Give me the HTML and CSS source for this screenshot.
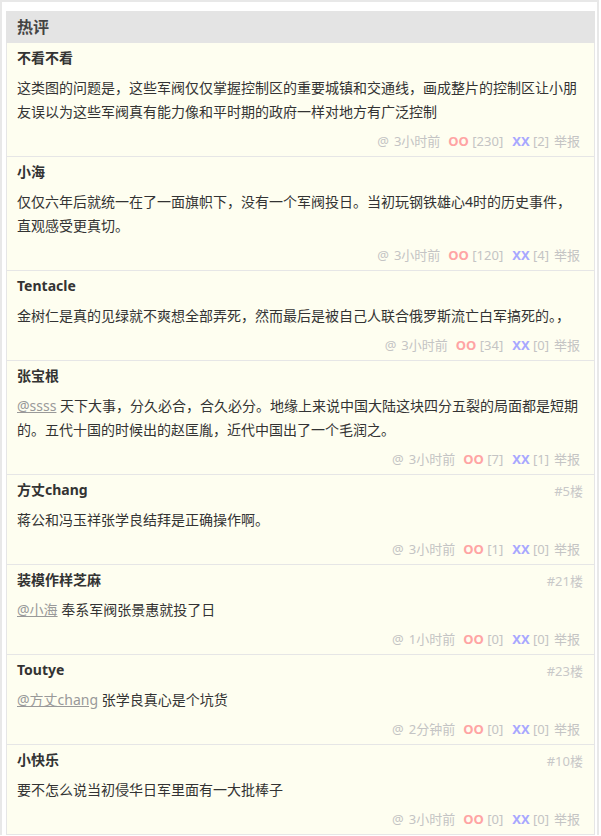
FILE: index.html
```html
<!DOCTYPE html>
<html lang="zh-CN">
<head>
<meta charset="utf-8">
<title>热评</title>
<link rel="stylesheet" href="styles.css">
</head>
<body>
<div class="wrap">
  <div class="head">热评</div>
  <ul class="list">
    <li class="item">
      <div class="top"><span class="name">不看不看</span></div>
      <p class="text">这类图的问题是，这些军阀仅仅掌握控制区的重要城镇和交通线，画成整片的控制区让小朋友误以为这些军阀真有能力像和平时期的政府一样对地方有广泛控制</p>
      <div class="foot"><span class="at">@</span><span class="time">3小时前</span><span class="oo">OO</span> <span class="cnt">[230]</span><span class="xx">XX</span> <span class="cnt">[2]</span><span class="rep">举报</span></div>
    </li>
    <li class="item">
      <div class="top"><span class="name">小海</span></div>
      <p class="text">仅仅六年后就统一在了一面旗帜下，没有一个军阀投日。当初玩钢铁雄心4时的历史事件，直观感受更真切。</p>
      <div class="foot"><span class="at">@</span><span class="time">3小时前</span><span class="oo">OO</span> <span class="cnt">[120]</span><span class="xx">XX</span> <span class="cnt">[4]</span><span class="rep">举报</span></div>
    </li>
    <li class="item">
      <div class="top"><span class="name">Tentacle</span></div>
      <p class="text">金树仁是真的见绿就不爽想全部弄死，然而最后是被自己人联合俄罗斯流亡白军搞死的。，</p>
      <div class="foot"><span class="at">@</span><span class="time">3小时前</span><span class="oo">OO</span> <span class="cnt">[34]</span><span class="xx">XX</span> <span class="cnt">[0]</span><span class="rep">举报</span></div>
    </li>
    <li class="item">
      <div class="top"><span class="name">张宝根</span></div>
      <p class="text"><a class="mention" href="#">@ssss</a> 天下大事，分久必合，合久必分。地缘上来说中国大陆这块四分五裂的局面都是短期的。五代十国的时候出的赵匡胤，近代中国出了一个毛润之。</p>
      <div class="foot"><span class="at">@</span><span class="time">3小时前</span><span class="oo">OO</span> <span class="cnt">[7]</span><span class="xx">XX</span> <span class="cnt">[1]</span><span class="rep">举报</span></div>
    </li>
    <li class="item">
      <div class="top"><span class="name">方丈chang</span><span class="floor">#5楼</span></div>
      <p class="text">蒋公和冯玉祥张学良结拜是正确操作啊。</p>
      <div class="foot"><span class="at">@</span><span class="time">3小时前</span><span class="oo">OO</span> <span class="cnt">[1]</span><span class="xx">XX</span> <span class="cnt">[0]</span><span class="rep">举报</span></div>
    </li>
    <li class="item">
      <div class="top"><span class="name">装模作样芝麻</span><span class="floor">#21楼</span></div>
      <p class="text"><a class="mention" href="#">@小海</a> 奉系军阀张景惠就投了日</p>
      <div class="foot"><span class="at">@</span><span class="time">1小时前</span><span class="oo">OO</span> <span class="cnt">[0]</span><span class="xx">XX</span> <span class="cnt">[0]</span><span class="rep">举报</span></div>
    </li>
    <li class="item">
      <div class="top"><span class="name">Toutye</span><span class="floor">#23楼</span></div>
      <p class="text"><a class="mention" href="#">@方丈chang</a> 张学良真心是个坑货</p>
      <div class="foot"><span class="at">@</span><span class="time">2分钟前</span><span class="oo">OO</span> <span class="cnt">[0]</span><span class="xx">XX</span> <span class="cnt">[0]</span><span class="rep">举报</span></div>
    </li>
    <li class="item">
      <div class="top"><span class="name">小快乐</span><span class="floor">#10楼</span></div>
      <p class="text">要不怎么说当初侵华日军里面有一大批棒子</p>
      <div class="foot"><span class="at">@</span><span class="time">3小时前</span><span class="oo">OO</span> <span class="cnt">[0]</span><span class="xx">XX</span> <span class="cnt">[0]</span><span class="rep">举报</span></div>
    </li>
  </ul>
</div>
</body>
</html>
```

FILE: styles.css
```css
html, body {
  margin: 0;
  padding: 0;
  background: #fff;
}
body {
  font-family: "Noto Sans", "Noto Sans CJK SC", sans-serif;
  color: #333;
}
.wrap {
  width: 599px;
  box-sizing: border-box;
  border: 2px solid #e8e8e8;
  border-bottom: none;
  padding: 9px 2px 0 4px;
}
.head {
  height: 32px;
  line-height: 32px;
  background: #e4e4e4;
  padding-left: 11px;
  font-size: 16px;
  font-weight: bold;
  color: #444;
}
.list {
  list-style: none;
  margin: 0;
  padding: 0;
}
.item {
  background: #fefef0;
  border: 1px solid #e6e6e6;
  border-top: none;
  padding: 5px 14px 5px 10px;
}
.top {
  display: flex;
  justify-content: space-between;
  align-items: center;
  height: 20px;
}
.name {
  font-size: 14px;
  line-height: 20px;
  font-weight: bold;
  color: #333;
}
.floor {
  font-size: 13px;
  color: #c8c8c8;
  margin-right: -3px;
}
.text {
  margin: 8px 0 0;
  font-size: 14px;
  line-height: 24px;
  color: #333;
}
.mention {
  color: #999;
  text-decoration: underline;
}
.foot {
  margin-top: 7px;
  height: 20px;
  line-height: 20px;
  text-align: right;
  font-size: 13px;
  color: #c4c4c4;
}
.time {
  margin-left: 5px;
  margin-right: 8px;
}
.oo {
  font-weight: bold;
  color: #ffa4a4;
}
.xx {
  font-weight: bold;
  color: #a8a8ff;
  margin-left: 9px;
}
.rep {
  margin-left: 5px;
}
```
